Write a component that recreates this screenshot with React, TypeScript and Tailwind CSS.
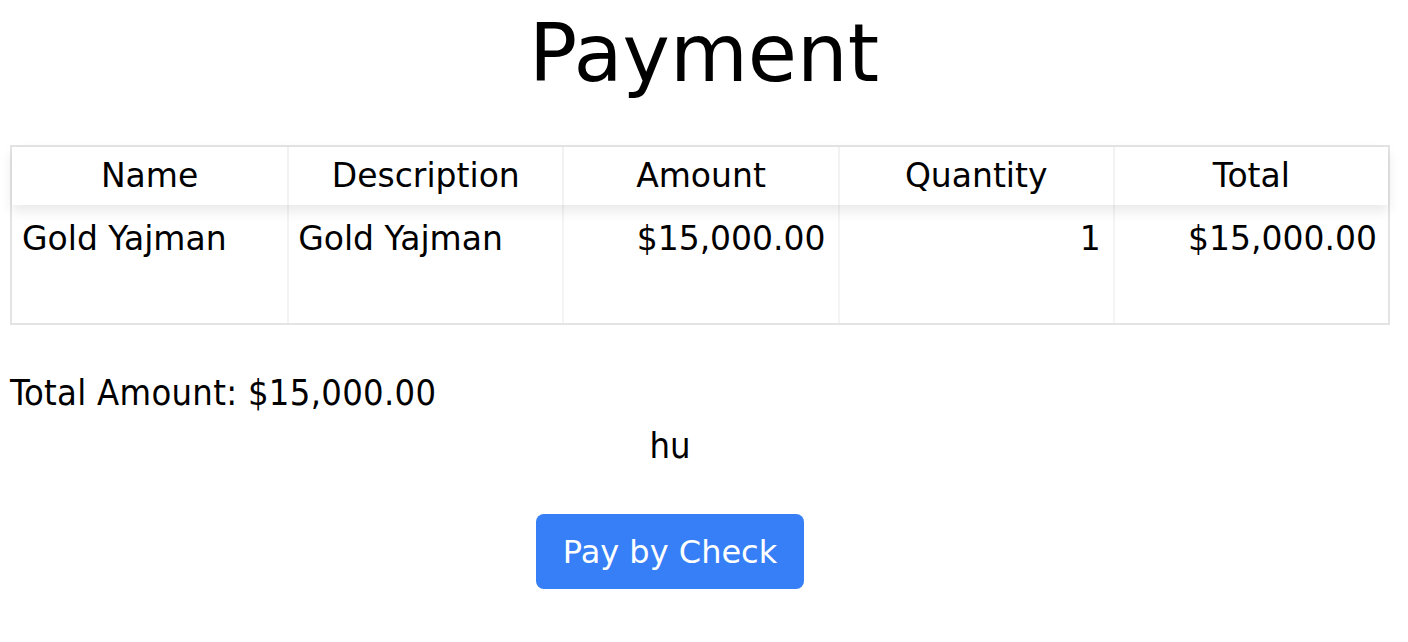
import React from 'react';

type Row = { name: string; description: string; amount: string; quantity: number; total: string };

const ROWS: Row[] = [
  { name: 'Gold Yajman', description: 'Gold Yajman', amount: '$15,000.00', quantity: 1, total: '$15,000.00' },
];

const HEADERS = ['Name', 'Description', 'Amount', 'Quantity', 'Total'];

export default function App() {
  return (
    <div className="min-h-screen bg-white text-black font-['DejaVu_Sans',Verdana,sans-serif]">
      <h1 className="mt-[14px] text-center text-[80px] leading-none font-normal">Payment</h1>

      {/* table */}
      <div className="ml-[10px] mr-[18px] mt-[51px] border-2 border-[#e4e4e4]">
        <div className="relative z-10 grid grid-cols-5 bg-white shadow-[0_6px_12px_rgba(0,0,0,0.09)]">
          {HEADERS.map((h, i) => (
            <div
              key={h}
              className={`h-[58px] text-center text-[33px] leading-[58px] ${i > 0 ? 'border-l-2 border-[#f2f2f2]' : ''}`}
            >
              {h}
            </div>
          ))}
        </div>
        {ROWS.map(r => (
          <div key={r.name} className="grid grid-cols-5 text-[33px] leading-[36px] whitespace-nowrap">
            <div className="h-[118px] pl-[10px] pr-3 pt-4 text-left">{r.name}</div>
            <div className="h-[118px] border-l-2 border-[#f4f4f4] pl-[9px] pr-3 pt-4 text-left">{r.description}</div>
            <div className="h-[118px] border-l-2 border-[#f4f4f4] pl-3 pr-3 pt-4 text-right">{r.amount}</div>
            <div className="h-[118px] border-l-2 border-[#f4f4f4] pl-3 pr-3 pt-4 text-right">{r.quantity}</div>
            <div className="h-[118px] border-l-2 border-[#f4f4f4] pl-3 pr-[11px] pt-4 text-right">{r.total}</div>
          </div>
        ))}
      </div>

      <div className="font-['DejaVu_Sans_Condensed','DejaVu_Sans',sans-serif]">
        <p className="ml-[10px] mt-[50px] text-[36px] leading-none tracking-[0.3px]">Total Amount: $15,000.00</p>
        <div className="w-[1340px] flex flex-col items-center">
          <p className="mt-[17px] text-[36px] leading-none">hu</p>
          <button
            type="button"
            className="mt-[50px] flex h-[75px] w-[268px] items-center justify-center rounded-[8px] bg-[#367ff6] text-[32px] text-white font-['DejaVu_Sans',sans-serif]"
          >
            Pay by Check
          </button>
        </div>
      </div>
    </div>
  );
}
